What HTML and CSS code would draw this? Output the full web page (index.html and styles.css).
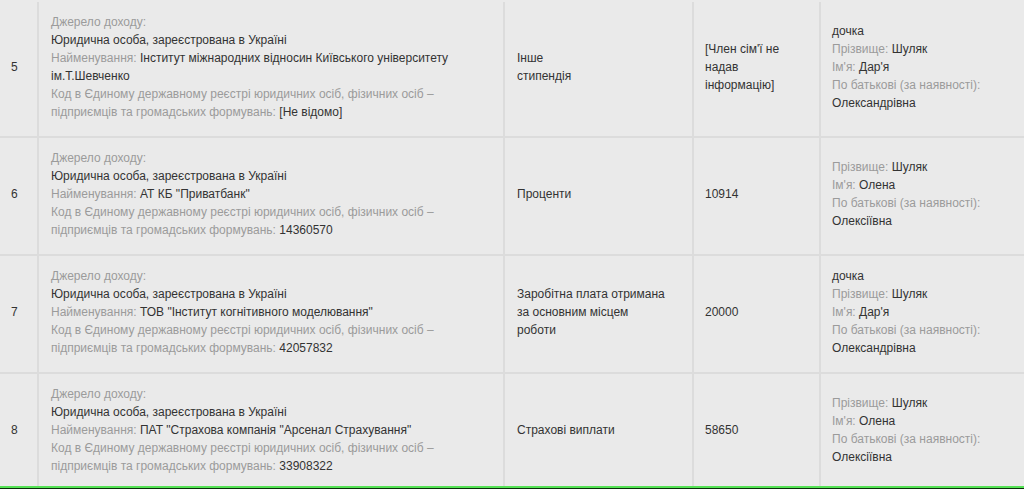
FILE: index.html
```html
<!DOCTYPE html>
<html lang="uk">
<head>
<meta charset="utf-8">
<title>Доходи</title>
<link rel="stylesheet" href="styles.css">
</head>
<body>
<table class="income">
  <colgroup>
    <col class="c-num"><col class="c-src"><col class="c-type"><col class="c-sum"><col class="c-who">
  </colgroup>
  <tbody>
    <tr>
      <td class="num">5</td>
      <td>
        <div class="src">
          <div class="lbl">Джерело доходу:</div>
          <div class="val">Юридична особа, зареєстрована в Україні</div>
          <div><span class="lbl">Найменування:</span> <span class="val">Інститут міжнародних відносин Київського університету ім.Т.Шевченко</span></div>
          <div><span class="lbl">Код в Єдиному державному реєстрі юридичних осіб, фізичних осіб – підприємців та громадських формувань:</span> <span class="val">[Не відомо]</span></div>
        </div>
      </td>
      <td><div class="type"><div class="val">Інше</div><div class="val">стипендія</div></div></td>
      <td><div class="sum val">[Член сім'ї не надав інформацію]</div></td>
      <td>
        <div class="val">дочка</div>
        <div><span class="lbl">Прізвище:</span> <span class="val">Шуляк</span></div>
        <div><span class="lbl">Ім'я:</span> <span class="val">Дар'я</span></div>
        <div class="lbl">По батькові (за наявності):</div>
        <div class="val">Олександрівна</div>
      </td>
    </tr>
    <tr>
      <td class="num">6</td>
      <td>
        <div class="src">
          <div class="lbl">Джерело доходу:</div>
          <div class="val">Юридична особа, зареєстрована в Україні</div>
          <div><span class="lbl">Найменування:</span> <span class="val">АТ КБ "Приватбанк"</span></div>
          <div><span class="lbl">Код в Єдиному державному реєстрі юридичних осіб, фізичних осіб – підприємців та громадських формувань:</span> <span class="val">14360570</span></div>
        </div>
      </td>
      <td><div class="type val">Проценти</div></td>
      <td><div class="sum val">10914</div></td>
      <td>
        <div><span class="lbl">Прізвище:</span> <span class="val">Шуляк</span></div>
        <div><span class="lbl">Ім'я:</span> <span class="val">Олена</span></div>
        <div class="lbl">По батькові (за наявності):</div>
        <div class="val">Олексіївна</div>
      </td>
    </tr>
    <tr>
      <td class="num">7</td>
      <td>
        <div class="src">
          <div class="lbl">Джерело доходу:</div>
          <div class="val">Юридична особа, зареєстрована в Україні</div>
          <div><span class="lbl">Найменування:</span> <span class="val">ТОВ "Інститут когнітивного моделювання"</span></div>
          <div><span class="lbl">Код в Єдиному державному реєстрі юридичних осіб, фізичних осіб – підприємців та громадських формувань:</span> <span class="val">42057832</span></div>
        </div>
      </td>
      <td><div class="type val">Заробітна плата отримана за основним місцем роботи</div></td>
      <td><div class="sum val">20000</div></td>
      <td>
        <div class="val">дочка</div>
        <div><span class="lbl">Прізвище:</span> <span class="val">Шуляк</span></div>
        <div><span class="lbl">Ім'я:</span> <span class="val">Дар'я</span></div>
        <div class="lbl">По батькові (за наявності):</div>
        <div class="val">Олександрівна</div>
      </td>
    </tr>
    <tr>
      <td class="num">8</td>
      <td>
        <div class="src">
          <div class="lbl">Джерело доходу:</div>
          <div class="val">Юридична особа, зареєстрована в Україні</div>
          <div><span class="lbl">Найменування:</span> <span class="val">ПАТ "Страхова компанія "Арсенал Страхування"</span></div>
          <div><span class="lbl">Код в Єдиному державному реєстрі юридичних осіб, фізичних осіб – підприємців та громадських формувань:</span> <span class="val">33908322</span></div>
        </div>
      </td>
      <td><div class="type val">Страхові виплати</div></td>
      <td><div class="sum val">58650</div></td>
      <td>
        <div><span class="lbl">Прізвище:</span> <span class="val">Шуляк</span></div>
        <div><span class="lbl">Ім'я:</span> <span class="val">Олена</span></div>
        <div class="lbl">По батькові (за наявності):</div>
        <div class="val">Олексіївна</div>
      </td>
    </tr>
  </tbody>
</table>
<div class="bottom-bar"></div>
</body>
</html>
```

FILE: styles.css
```css
html, body {
  margin: 0;
  background: #eaeaea;
}
body {
  padding-top: 2px;
  font-family: "Liberation Sans", Arial, sans-serif;
  font-size: 12px;
  line-height: 18px;
  color: #333;
  overflow: hidden;
}
.income {
  border-collapse: collapse;
  table-layout: fixed;
  width: 1024px;
}
.c-num { width: 38px; }
.c-src { width: 466px; }
.c-type { width: 189px; }
.c-sum { width: 127px; }
.c-who { width: 204px; }

.income td {
  vertical-align: middle;
  padding: 11px 10px 15px 11px;
  border-right: 2px solid #dcdcdc;
  border-bottom: 2px solid #dcdcdc;
}
.income td:last-child {
  border-right: none;
}
.income td.num {
  padding-left: 11px;
}
.src {
  max-width: 425px;
  padding-left: 1px;
}
.type {
  max-width: 150px;
  padding-left: 1px;
}
.lbl {
  color: #9b9b9b;
}
.val {
  color: #333;
}
.bottom-bar {
  position: fixed;
  left: 0;
  right: 0;
  top: 486px;
  height: 1px;
  border-top: 2px solid #55e355;
  background: #0c2c0c;
}
```
